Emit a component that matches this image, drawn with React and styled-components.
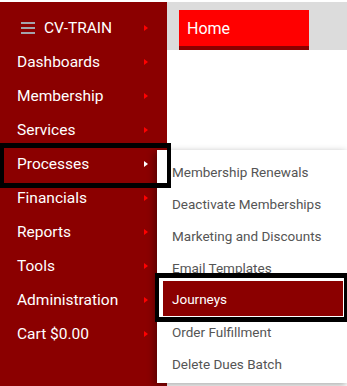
import React from "react";
import styled, { createGlobalStyle } from "styled-components";

const GlobalStyle = createGlobalStyle`
  html, body {
    margin: 0;
    padding: 0;
    background: #fff;
    overflow: hidden;
  }
  body {
    font-family: Roboto, "Liberation Sans", Arial, sans-serif;
  }
`;

const Page = styled.div`
  position: relative;
  width: 347px;
  height: 386px;
  padding-top: 2px;
  box-sizing: border-box;
  display: flex;
  overflow: hidden;
  background: #fff;
`;

const Sidebar = styled.nav`
  width: 167px;
  flex-shrink: 0;
  background: #8b0000;
  padding-top: 9px;
  display: flex;
  flex-direction: column;
`;

const NavRow = styled.div`
  height: 34px;
  display: flex;
  align-items: center;
  justify-content: space-between;
  padding: 0 19px 0 ${(p) => p.$indent}px;
  color: #fff;
  font-size: 15.5px;
  white-space: nowrap;
`;

const Brand = styled.div`
  display: flex;
  align-items: center;
  gap: 9px;
`;

const Burger = styled.div`
  width: 14px;
  display: flex;
  flex-direction: column;
  gap: 3px;
  & > span {
    display: block;
    height: 2px;
    background: #a3a3ab;
  }
`;

const Arrow = styled.span`
  width: 0;
  height: 0;
  border-left: 4px solid ${(p) => (p.$light ? "#fff" : "#ff0000")};
  border-top: 3px solid transparent;
  border-bottom: 3px solid transparent;
`;

const Main = styled.main`
  flex: 1;
  display: flex;
  flex-direction: column;
  background: #fff;
`;

const Header = styled.header`
  height: 48px;
  box-sizing: border-box;
  background: #dcdcdc;
  padding: 8px 0 0 12px;
`;

const Tab = styled.div`
  width: 130px;
  height: 40px;
  box-sizing: border-box;
  background: #ff0000;
  border-bottom: 4px solid #8b0000;
  color: #fff;
  font-size: 16px;
  padding-left: 8px;
  display: flex;
  align-items: center;
`;

const Dropdown = styled.div`
  position: absolute;
  left: 157px;
  top: 150px;
  width: 192px;
  height: 233px;
  box-sizing: border-box;
  padding-top: 6px;
  background: #fff;
  box-shadow: -3px 2px 7px rgba(0, 0, 0, 0.35);
  display: flex;
  flex-direction: column;
`;

const MenuItem = styled.div`
  height: ${(p) => (p.$active ? 35 : 32)}px;
  margin: ${(p) => (p.$active ? "-3px" : "0")} 6px 0 6px;
  padding-left: 9px;
  display: flex;
  align-items: center;
  font-size: 13.5px;
  white-space: nowrap;
  color: ${(p) => (p.$active ? "#fff" : "#555")};
  background: ${(p) => (p.$active ? "#8b0000" : "transparent")};
`;

const Callout = styled.div`
  position: absolute;
  left: ${(p) => p.$x}px;
  top: ${(p) => p.$y}px;
  width: ${(p) => p.$w}px;
  height: ${(p) => p.$h}px;
  box-sizing: border-box;
  border: 5px solid #000;
  border-left-width: 4px;
  border-right-width: 4px;
  pointer-events: none;
`;

const navItems = [
  "Dashboards",
  "Membership",
  "Services",
  "Processes",
  "Financials",
  "Reports",
  "Tools",
  "Administration",
  "Cart $0.00",
];

const subItems = [
  "Membership Renewals",
  "Deactivate Memberships",
  "Marketing and Discounts",
  "Email Templates",
  "Journeys",
  "Order Fulfillment",
  "Delete Dues Batch",
];

export default function App() {
  return (
    <>
      <GlobalStyle />
      <Page>
        <Sidebar>
          <NavRow $indent={21}>
            <Brand>
              <Burger>
                <span />
                <span />
                <span />
              </Burger>
              CV-TRAIN
            </Brand>
            <Arrow />
          </NavRow>
          {navItems.map((item) => (
            <NavRow key={item} $indent={17}>
              {item}
              <Arrow $light={item === "Processes"} />
            </NavRow>
          ))}
        </Sidebar>
        <Main>
          <Header>
            <Tab>Home</Tab>
          </Header>
        </Main>
        <Dropdown>
          {subItems.map((item) => (
            <MenuItem key={item} $active={item === "Journeys"}>
              {item}
            </MenuItem>
          ))}
        </Dropdown>
        <Callout $x={0} $y={143} $w={171} $h={45} />
        <Callout $x={155} $y={273} $w={193} $h={49} />
      </Page>
    </>
  );
}
